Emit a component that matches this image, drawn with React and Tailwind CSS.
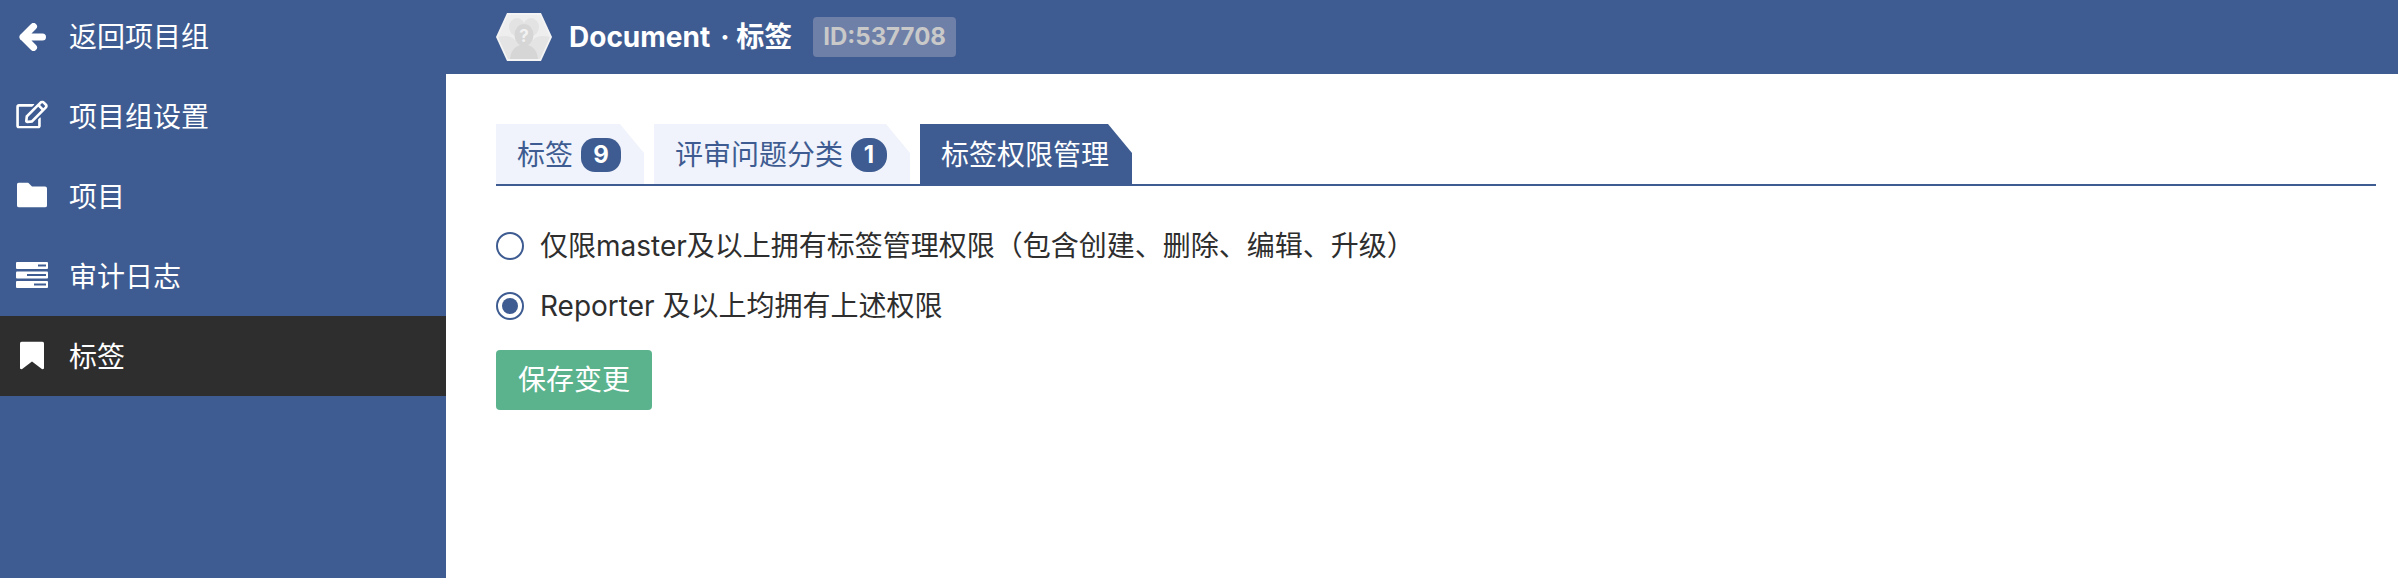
import React from "react";
import { FaRegEdit } from "react-icons/fa";

const BackIcon = () => (
    <svg width="27" height="28" viewBox="0 0 27 28" fill="none" stroke="#fff" strokeWidth="7" strokeLinecap="round" strokeLinejoin="round">
        <path d="M14.5 3.5 L4 14 L14.5 24.5 M4 14 L23.5 14" />
    </svg>
);

const FolderIcon = () => (
    <svg width="30" height="25" viewBox="0 0 30 25" fill="#fff" className="-translate-y-[2.5px]">
        <path d="M2 0h9l4 4h13a2 2 0 0 1 2 2v17a2 2 0 0 1-2 2H2a2 2 0 0 1-2-2V2a2 2 0 0 1 2-2z" />
    </svg>
);

const ServerIcon = () => (
    <svg width="32" height="26" viewBox="0 0 32 26" fill="none" className="-translate-y-[2px]">
        <rect x="0" y="0" width="32" height="7" rx="1" fill="#fff" />
        <rect x="0" y="9.5" width="32" height="7" rx="1" fill="#fff" />
        <rect x="0" y="19" width="32" height="7" rx="1" fill="#fff" />
        <rect x="22" y="2.5" width="8" height="2" fill="#3e5c91" />
        <rect x="11" y="12" width="19" height="2" fill="#3e5c91" />
        <rect x="18" y="21.5" width="12" height="2" fill="#3e5c91" />
    </svg>
);

const BookmarkIcon = () => (
    <svg width="24" height="28" viewBox="0 0 24 28" fill="#fff" className="-translate-y-[1.5px]">
        <path d="M2 0h20a2 2 0 0 1 2 2v25l-1.5 1L12 20 1.5 28 0 27V2a2 2 0 0 1 2-2z" />
    </svg>
);

const menu = [
    { label: "返回项目组", icon: <BackIcon /> },
    { label: "项目组设置", icon: <FaRegEdit className="w-[32px] h-[28px] -translate-y-[2.5px]" /> },
    { label: "项目", icon: <FolderIcon /> },
    { label: "审计日志", icon: <ServerIcon /> },
    { label: "标签", icon: <BookmarkIcon />, active: true },
];

// default project avatar
const Avatar = () => (
    <svg width="56" height="48" viewBox="0 0 56 48" className="shrink-0">
        <polygon points="11,0 45,0 56,24 45,48 11,48 0,24" fill="#f4f4f4" />
        <polygon points="12,2 44,2 54,24 44,46 12,46 2,24" fill="#eeeeee" />
        <ellipse cx="21" cy="14" rx="8" ry="9" fill="#e3e3e3" />
        <ellipse cx="35" cy="14" rx="8" ry="9" fill="#e3e3e3" />
        <path d="M2 24 Q14 21 19 27 L37 27 Q42 21 54 24 L44 46 L12 46 Z" fill="#e4e4e4" />
        <ellipse cx="28" cy="22" rx="9.5" ry="11" fill="#d6d6d6" />
        <path d="M14 46 Q15 33 28 31 Q41 33 42 46 Z" fill="#d6d6d6" />
        <text x="28" y="29" textAnchor="middle" fontSize="17" fontWeight="700" fill="#f2f2f2" fontFamily="Inter, sans-serif">?</text>
    </svg>
);

const Radio = ({ checked, children }) => (
    <label className="flex items-center gap-[16px] h-[28px] text-[28px] text-[#2e2e2e]">
        <span className="flex items-center justify-center w-[28px] h-[28px] rounded-full border-[2px] border-[#3e5c91] bg-white">
            {checked && <span className="w-[16px] h-[16px] rounded-full bg-[#3e5c91]" />}
        </span>
        <span>{children}</span>
    </label>
);

export default function App() {
    return (
        <div className="flex h-[578px] bg-white font-['Inter','Noto_Sans_CJK_SC',sans-serif] overflow-hidden">
            {/* Sidebar */}
            <aside className="w-[446px] shrink-0 bg-[#3e5c91] text-white">
                <div className="-mt-[4px]">
                    {menu.map((item) => (
                        <div
                            key={item.label}
                            className={`flex items-center h-[80px] pl-[16px] pt-[2px] text-[28px] ${item.active ? "bg-[#2e2e2e]" : ""}`}
                        >
                            <span className="flex items-center justify-center w-[32px] mr-[21px]">{item.icon}</span>
                            {item.label}
                        </div>
                    ))}
                </div>
            </aside>

            <div className="flex-1 min-w-0">
                {/* Top bar */}
                <header className="flex items-center h-[74px] pl-[50px] bg-[#3e5c91]">
                    <Avatar />
                    <span className="ml-[17px] text-[28px] font-bold text-white">Document</span>
                    <span className="ml-[10px] text-[28px] font-bold text-white">· 标签</span>
                    <span className="ml-[21px] flex items-center h-[40px] px-[10px] rounded-[4px] bg-[#6e80a8] text-[24px] font-bold text-[#c9c9c9]">
                        ID:537708
                    </span>
                </header>

                {/* Content */}
                <main className="pl-[50px] pr-[22px] pt-[50px]">
                    <div className="flex gap-[10px] border-b-2 border-[#3e5c91] h-[62px]">
                        <div className="flex items-center h-[60px] w-[148px] pl-[21px] pt-[2px] gap-[8px] bg-[#f0f3fb] text-[#3e5c91] text-[28px] [clip-path:polygon(0_0,calc(100%-24px)_0,100%_29px,100%_100%,0_100%)]">
                            标签
                            <span className="flex items-center justify-center w-[40px] h-[34px] rounded-[14px] bg-[#3e5c91] text-white text-[24px] font-bold">9</span>
                        </div>
                        <div className="flex items-center h-[60px] w-[256px] pl-[21px] pt-[2px] gap-[8px] bg-[#f0f3fb] text-[#3e5c91] text-[28px] [clip-path:polygon(0_0,calc(100%-24px)_0,100%_29px,100%_100%,0_100%)]">
                            评审问题分类
                            <span className="flex items-center justify-center w-[36px] h-[34px] rounded-[16px] bg-[#3e5c91] text-white text-[24px] font-bold">1</span>
                        </div>
                        <div className="flex items-center h-[60px] w-[212px] pl-[21px] pt-[2px] bg-[#3e5c91] text-white text-[28px] [clip-path:polygon(0_0,calc(100%-24px)_0,100%_29px,100%_100%,0_100%)]">
                            标签权限管理
                        </div>
                    </div>

                    <div className="flex flex-col gap-[32px] mt-[46px]">
                        <Radio>仅限master及以上拥有标签管理权限（包含创建、删除、编辑、升级）</Radio>
                        <Radio checked>Reporter 及以上均拥有上述权限</Radio>
                    </div>

                    <button className="mt-[30px] w-[156px] h-[60px] rounded-[4px] bg-[#5ab38d] text-white text-[28px]">
                        保存变更
                    </button>
                </main>
            </div>
        </div>
    );
}
